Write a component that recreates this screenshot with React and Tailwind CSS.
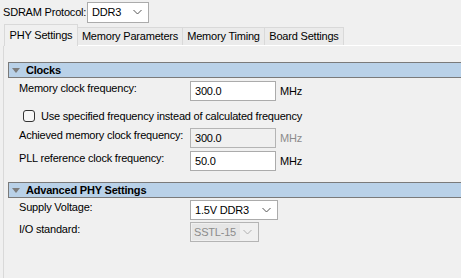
import React from "react";

const Chevron = ({ color = "#555" }) => (
	<svg width="9" height="6" viewBox="0 0 9 6" className="shrink-0">
		<path d="M0.5 1 L4.5 5 L8.5 1" fill="none" stroke={color} strokeWidth="1" />
	</svg>
);

const Triangle = () => (
	<svg width="8" height="5" viewBox="0 0 8 5" className="shrink-0">
		<path d="M0 0 L8 0 L4 5 Z" fill="#7d7d7d" />
	</svg>
);

const SectionHeader = ({ title }) => (
	<div className="ml-[4px] h-[16px] flex items-center gap-[6px] pl-[3px] border-y border-l border-[#7a7a7a] bg-[#b9d1e8]">
		<Triangle />
		<span className="font-bold text-black leading-none">{title}</span>
	</div>
);

const Row = ({ label, children, className = "" }) => (
	<div className={"flex items-center h-[20px] pl-[15px] " + className}>
		<span className="w-[171px] shrink-0 pb-[6px] text-black">{label}</span>
		{children}
	</div>
);

const TextInput = ({ value, unit, disabled }) => (
	<>
		<div
			className={
				"w-[86px] h-[20px] flex items-center pl-[4px] border " +
				(disabled ? "border-[#b4b4b4] bg-[#f0f0f0]" : "border-[#ababab] bg-white")
			}
		>
			{value}
		</div>
		<span className={"ml-[4px] " + (disabled ? "text-[#8c8c8c]" : "text-black")}>{unit}</span>
	</>
);

const Tab = ({ label, active, width }) =>
	active ? (
		<div
			className={
				"relative z-10 h-[22px] -mb-px flex items-center justify-center border-x border-t border-[#d9d9d9] bg-[#f0f0f0] " +
				width
			}
		>
			{label}
		</div>
	) : (
		<div
			className={
				"h-[18px] flex items-center justify-center border-t border-r border-[#d9d9d9] bg-[#ebebeb] " + width
			}
		>
			{label}
		</div>
	);

export default function App() {
	return (
		<div
			className="w-[461px] h-[278px] overflow-hidden bg-[#f0f0f0] text-[11px] text-black whitespace-nowrap tracking-[-0.2px]"
			style={{ fontFamily: '"Liberation Sans", Arial, sans-serif' }}
		>
			{/* protocol selector */}
			<div className="flex items-center h-[22px] mt-px pl-[3px]">
				<span className="w-[84px]">SDRAM Protocol:</span>
				<div className="w-[62px] h-[21px] flex items-center justify-between pl-[4px] pr-[6px] border border-[#ababab] bg-white">
					<span>DDR3</span>
					<Chevron />
				</div>
			</div>

			{/* tabs */}
			<div className="flex items-end h-[22px] pl-[4px]">
				<Tab label="PHY Settings" active width="w-[74px]" />
				<Tab label="Memory Parameters" width="w-[105px]" />
				<Tab label="Memory Timing" width="w-[82px]" />
				<Tab label="Board Settings" width="w-[79px]" />
			</div>

			{/* tab content */}
			<div className="ml-[3px] h-[240px] border-l border-t border-l-[#d9d9d9] border-t-white pt-[16px]">
				<SectionHeader title="Clocks" />

				<Row label="Memory clock frequency:" className="mt-[3px]">
					<TextInput value="300.0" unit="MHz" />
				</Row>

				<div className="flex items-center h-[12px] mt-[9px] pl-[19px] gap-[6px]">
					<div className="w-[12px] h-[12px] rounded-[3px] border border-[#333] bg-[#f7f7f7]" />
					<span>Use specified frequency instead of calculated frequency</span>
				</div>

				<Row label="Achieved memory clock frequency:" className="mt-[6px]">
					<TextInput value="300.0" unit="MHz" disabled />
				</Row>

				<Row label="PLL reference clock frequency:" className="mt-[3px]">
					<TextInput value="50.0" unit="MHz" />
				</Row>

				<div className="mt-[11px]">
					<SectionHeader title="Advanced PHY Settings" />
				</div>

				<Row label="Supply Voltage:" className="mt-[2px]">
					<div className="w-[88px] h-[20px] flex items-center justify-between pl-[4px] pr-[6px] border border-[#ababab] bg-white">
						<span>1.5V DDR3</span>
						<Chevron />
					</div>
				</Row>

				<Row label="I/O standard:" className="mt-[2px]">
					<div className="w-[69px] h-[20px] flex items-center justify-between pl-px pr-[6px] border border-[#b4b4b4] bg-[#f0f0f0]">
						<span className="h-[16px] flex items-center pl-[2px] pr-[4px] bg-[#e6e6e6] text-[#8c8c8c]">SSTL-15</span>
						<Chevron color="#b0b0b0" />
					</div>
				</Row>
			</div>
		</div>
	);
}
